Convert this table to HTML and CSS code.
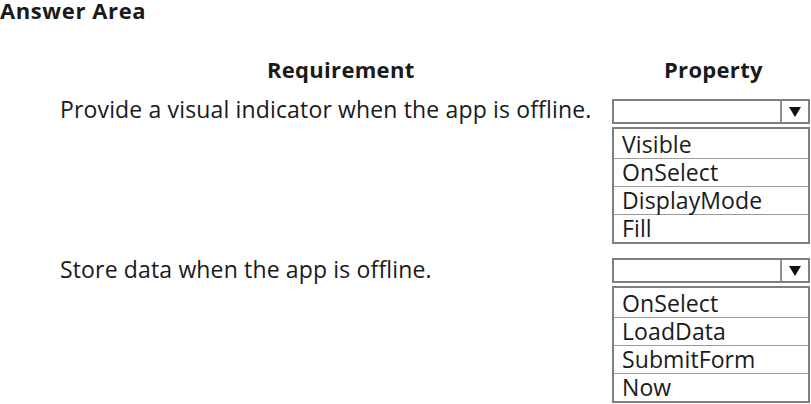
FILE: index.html
```html
<!DOCTYPE html>
<html>
<head>
<meta charset="utf-8">
<link rel="stylesheet" href="styles.css">
</head>
<body>
<div class="title">Answer Area</div>
<div class="grid">
  <div class="head head-req">Requirement</div>
  <div class="head head-prop">Property</div>

  <div class="req">Provide a visual indicator when the app is offline.</div>
  <div class="prop">
    <div class="select"><span class="field"></span><span class="arrow"><svg width="12" height="10" viewBox="0 0 12 10"><path d="M0 0H12L6 10Z" fill="#111"/></svg></span></div>
    <ul class="list">
      <li>Visible</li>
      <li>OnSelect</li>
      <li>DisplayMode</li>
      <li>Fill</li>
    </ul>
  </div>

  <div class="req req2">Store data when the app is offline.</div>
  <div class="prop prop2">
    <div class="select"><span class="field"></span><span class="arrow"><svg width="12" height="10" viewBox="0 0 12 10"><path d="M0 0H12L6 10Z" fill="#111"/></svg></span></div>
    <ul class="list">
      <li>OnSelect</li>
      <li>LoadData</li>
      <li>SubmitForm</li>
      <li>Now</li>
    </ul>
  </div>
</div>
</body>
</html>
```
FILE: styles.css
```css
html, body {
  margin: 0;
  padding: 0;
  background: #fff;
  color: #1a1a1a;
  font-family: "Open Sans", "Noto Sans", sans-serif;
}
.title {
  font-weight: 700;
  font-size: 22px;
  line-height: 18px;
  padding-top: 1px;
  letter-spacing: 0.6px;
}
.grid {
  display: grid;
  grid-template-columns: 612px 198px;
  margin-top: 37px;
}
.head {
  font-weight: 700;
  font-size: 22px;
  line-height: 26px;
  letter-spacing: 0.3px;
}
.head-req {
  padding-left: 267px;
}
.head-prop {
  padding-left: 52px;
}
.req {
  padding-left: 60px;
  font-size: 23px;
  line-height: 26px;
  letter-spacing: 0.15px;
  margin-top: 14px;
}
.req2 {
  margin-top: 12px;
}
.prop {
  margin-top: 17px;
}
.prop2 {
  margin-top: 14px;
}
.select {
  display: flex;
  height: 25px;
  box-sizing: border-box;
  border: 2px solid #7f7f7f;
}
.field {
  flex: 1;
}
.arrow {
  width: 26px;
  border-left: 2px solid #8f8f8f;
  display: flex;
  align-items: center;
  justify-content: center;
}
.list {
  list-style: none;
  margin: 3px 0 0;
  padding: 0;
  border: 2px solid #7f7f7f;
}
.list li {
  box-sizing: border-box;
  font-size: 23px;
  line-height: 27px;
  height: 28px;
  padding-left: 8px;
  letter-spacing: 0.1px;
  border-top: 1px solid #9a9a9a;
}
.list li:first-child {
  border-top: none;
  height: 29px;
  padding-top: 2px;
}
```
